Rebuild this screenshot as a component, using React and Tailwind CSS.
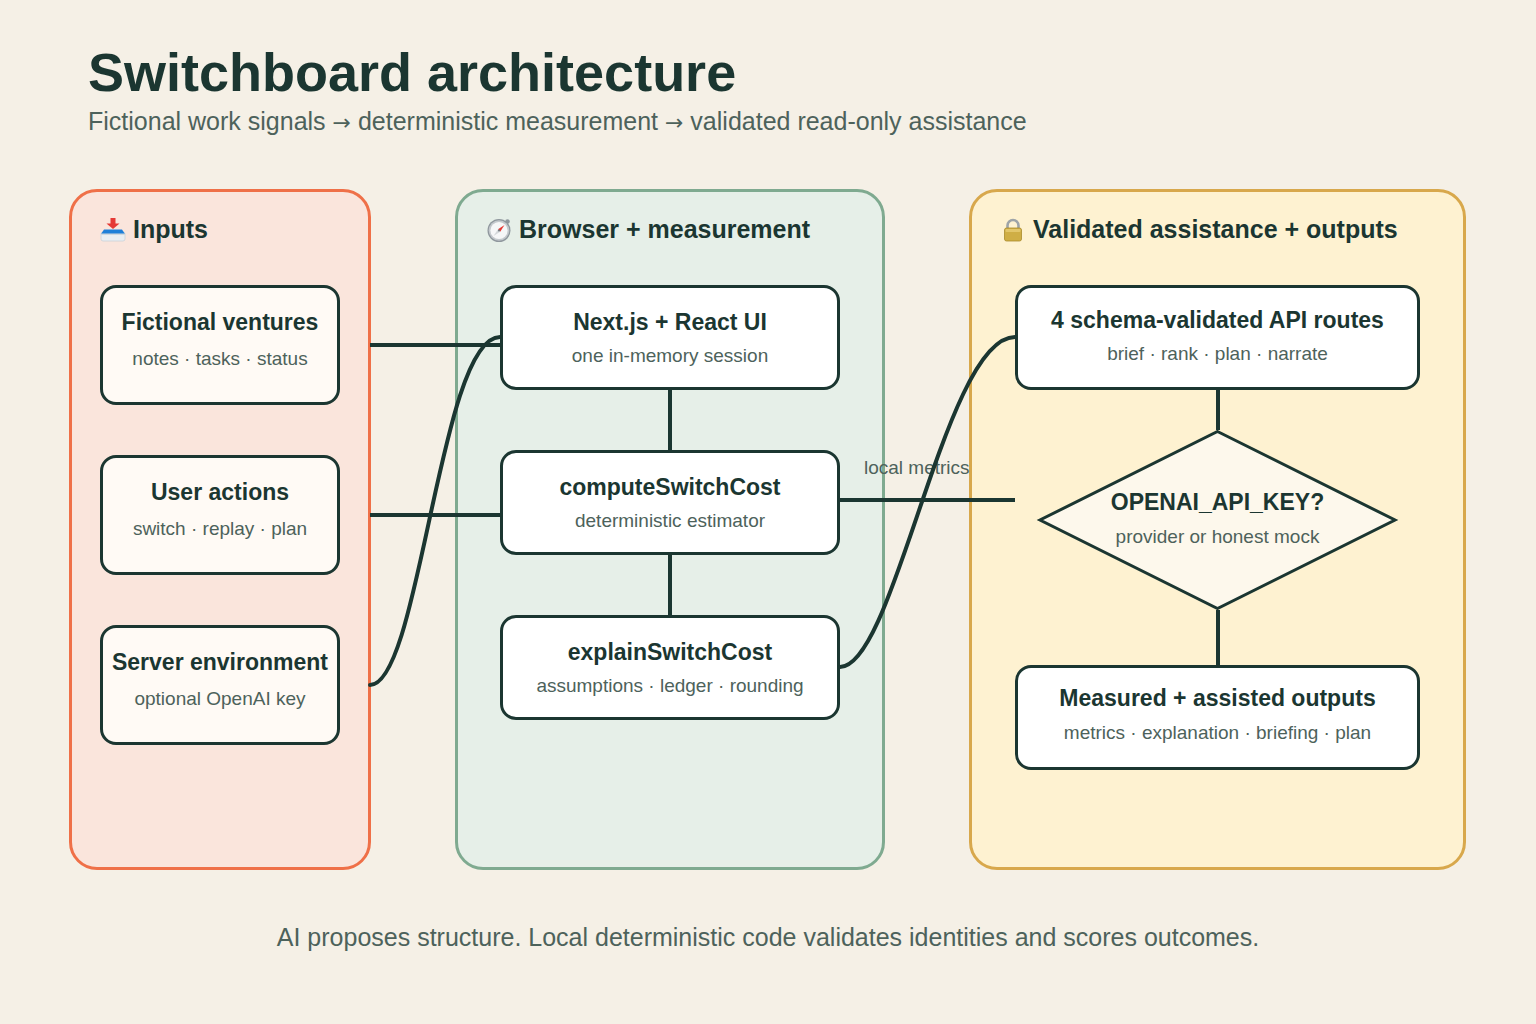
import React from "react";

const DARK = "#1b3631";

// Small emoji-like drawings used in the panel headings
function InboxIcon() {
  return (
    <svg width="26" height="26" viewBox="0 0 26 26">
      <rect x="10.5" y="1" width="5" height="6" fill="#e53935" />
      <polygon points="6.5,6.5 19.5,6.5 13,12" fill="#e53935" />
      <rect x="1" y="15" width="24" height="9" rx="2" fill="#e9eef2" stroke="#c9d2d8" strokeWidth="0.8" />
      <polygon points="4,12.5 22,12.5 25,17 1,17" fill="#1e7fd8" />
      <rect x="1" y="16.5" width="24" height="1.5" fill="#cfd8de" />
    </svg>
  );
}

function CompassIcon() {
  return (
    <svg width="26" height="26" viewBox="0 0 26 26">
      <circle cx="21.5" cy="4.5" r="2.3" fill="#8f979d" />
      <circle cx="13" cy="13.5" r="11.5" fill="#8f979d" />
      <circle cx="13" cy="13.5" r="10.3" fill="#c4c9cd" />
      <circle cx="13" cy="13.5" r="8.6" fill="#f6f7f8" />
      <polygon points="18.5,8 12,12.3 14.2,14.7" fill="#e53935" />
      <polygon points="7.5,19 12,12.3 14.2,14.7" fill="#d4d8db" />
      <circle cx="13" cy="13.5" r="1" fill="#6f777c" />
    </svg>
  );
}

function LockIcon() {
  return (
    <svg width="26" height="26" viewBox="0 0 26 26">
      <path d="M7.5 12 V8.5 a5.5 5.5 0 0 1 11 0 V12" fill="none" stroke="#9ea4a8" strokeWidth="2.6" />
      <rect x="4.5" y="11" width="17" height="13" rx="2" fill="#cfae45" stroke="#a98a2b" strokeWidth="0.8" />
      <rect x="5.5" y="12" width="15" height="3" rx="1" fill="#e2c66a" />
    </svg>
  );
}

function Arrow() {
  return <span className="font-['DejaVu_Sans',sans-serif] text-[22px]">→</span>;
}

function PanelTitle({ icon, children }) {
  return (
    <div className="flex items-center gap-[7px] pl-[28px] pt-[25px] h-[50px]">
      {icon}
      <span className="text-[25px] leading-none font-bold">{children}</span>
    </div>
  );
}

function Node({ title, sub, className, pad, gap }) {
  return (
    <div className={`shrink-0 rounded-[16px] border-[3px] border-[#1b3631] text-center whitespace-nowrap ${className} ${pad}`}>
      <div className="text-[23px] leading-none font-bold">{title}</div>
      <div className={`text-[19px] leading-none text-[#4d625b] ${gap}`}>{sub}</div>
    </div>
  );
}

function Stem({ height }) {
  return <div className={`w-[4px] bg-[#1b3631] shrink-0 ${height}`} />;
}

export default function App() {
  return (
    <div className="relative w-full h-[1024px] overflow-hidden bg-[#f5f0e6] text-[#1b3631] font-['Liberation_Sans',Arial,sans-serif]">
      {/* Heading */}
      <header className="pl-[88px] pt-[45px]">
        <h1 className="text-[54px] leading-none font-bold">Switchboard architecture</h1>
        <p className="mt-[10px] h-[24px] text-[25px] leading-none text-[#4d625b] whitespace-nowrap">
          Fictional work signals <Arrow /> deterministic measurement <Arrow /> validated read-only assistance
        </p>
      </header>

      {/* Three columns */}
      <div className="mt-[56px] flex gap-[84px] pl-[69px]">
        {/* Inputs */}
        <section className="w-[302px] h-[681px] rounded-[28px] border-[3px] border-[#ef7048] bg-[#fae5dc]">
          <PanelTitle icon={<InboxIcon />}>Inputs</PanelTitle>
          <div className="mt-[43px] ml-[28px] flex flex-col gap-[50px]">
            <Node title="Fictional ventures" sub="notes · tasks · status" className="w-[240px] h-[120px] bg-[#fffaf5]" pad="pt-[23px]" gap="mt-[15px]" />
            <Node title="User actions" sub="switch · replay · plan" className="w-[240px] h-[120px] bg-[#fffaf5]" pad="pt-[23px]" gap="mt-[15px]" />
            <Node title="Server environment" sub="optional OpenAI key" className="w-[240px] h-[120px] bg-[#fffaf5]" pad="pt-[23px]" gap="mt-[15px]" />
          </div>
        </section>

        {/* Browser + measurement */}
        <section className="w-[430px] h-[681px] rounded-[28px] border-[3px] border-[#7faa90] bg-[#e6efe8]">
          <PanelTitle icon={<CompassIcon />}>Browser + measurement</PanelTitle>
          <div className="mt-[43px] ml-[42px] w-[340px] flex flex-col items-center">
            <Node title="Next.js + React UI" sub="one in-memory session" className="w-[340px] h-[105px] bg-white" pad="pt-[23px]" gap="mt-[12px]" />
            <Stem height="h-[60px]" />
            <Node title="computeSwitchCost" sub="deterministic estimator" className="w-[340px] h-[105px] bg-white" pad="pt-[23px]" gap="mt-[12px]" />
            <Stem height="h-[60px]" />
            <Node title="explainSwitchCost" sub="assumptions · ledger · rounding" className="w-[340px] h-[105px] bg-white" pad="pt-[23px]" gap="mt-[12px]" />
          </div>
        </section>

        {/* Validated assistance + outputs */}
        <section className="w-[497px] h-[681px] rounded-[28px] border-[3px] border-[#d8a84c] bg-[#fef2d1]">
          <PanelTitle icon={<LockIcon />}>Validated assistance + outputs</PanelTitle>
          <div className="mt-[43px] ml-[43px] w-[405px] flex flex-col items-center">
            <Node title="4 schema-validated API routes" sub="brief · rank · plan · narrate" className="w-[405px] h-[105px] bg-white" pad="pt-[21px]" gap="mt-[12px]" />
            <Stem height="h-[40px]" />
            <div className="relative w-[405px] h-[180px] shrink-0 text-center">
              <svg className="absolute inset-0" width="405" height="180" viewBox="0 0 405 180">
                <polygon points="202.5,1.5 380,90 202.5,178.5 25,90" fill="#fdf8ec" stroke={DARK} strokeWidth="3" strokeLinejoin="miter" />
              </svg>
              <div className="relative pt-[61px]">
                <div className="text-[23px] leading-none font-bold">OPENAI_API_KEY?</div>
                <div className="mt-[13px] text-[19px] leading-none text-[#4d625b]">provider or honest mock</div>
              </div>
            </div>
            <Stem height="h-[55px]" />
            <Node title="Measured + assisted outputs" sub="metrics · explanation · briefing · plan" className="w-[405px] h-[105px] bg-white" pad="pt-[19px]" gap="mt-[13px]" />
          </div>
        </section>
      </div>

      <p className="mt-[55px] text-center text-[25px] leading-none text-[#4d625b]">
        AI proposes structure. Local deterministic code validates identities and scores outcomes.
      </p>

      {/* Edge label */}
      <span className="absolute left-[864px] top-[458px] text-[19px] leading-none text-[#4d625b]">local metrics</span>

      {/* Connectors between columns */}
      <svg className="absolute left-0 top-0 pointer-events-none" width="1536" height="1024" viewBox="0 0 1536 1024">
        <g fill="none" stroke={DARK} strokeWidth="4">
          <line x1="370" y1="345" x2="500" y2="345" />
          <line x1="370" y1="515" x2="500" y2="515" />
          <path d="M370 685 C420 685 440 337 500 337" strokeLinecap="round" />
          <line x1="840" y1="500" x2="1015" y2="500" />
          <path d="M840 667 C895 667 945 337 1015 337" strokeLinecap="round" />
        </g>
      </svg>
    </div>
  );
}
